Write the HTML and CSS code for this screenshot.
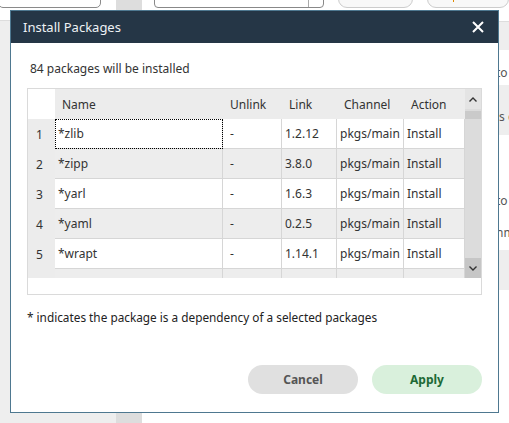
FILE: index.html
```html
<!DOCTYPE html>
<html lang="en">
<head>
    <meta charset="UTF-8">
    <meta name="viewport" content="width=device-width, initial-scale=1.0">
    <title>Install Packages</title>
    <link rel="stylesheet" href="styles.css">
</head>
<body>
<div id="page">
    <div class="side">
        <div class="sideTop"><div class="field"></div></div>
    </div>
    <div class="strip"></div>
    <div class="main">
        <div class="toolbar">
            <div class="select"><span class="caret"></span></div>
            <div class="btn"></div>
            <div class="btn"><span class="mark"></span></div>
        </div>
        <div class="list">
            <div class="item grey h28"></div>
            <div class="item h35 p14"><span>to a</span></div>
            <div class="item grey h50 p23"><span>is c</span></div>
            <div class="item h50"></div>
            <div class="item h30 p7"><span>to a</span></div>
            <div class="item h35 p9"><span>nm</span></div>
            <div class="item grey h40"></div>
        </div>
    </div>
</div>

<div class="dialog">
    <div class="dialogHead">
        <span class="title">Install Packages</span>
        <span class="close">
            <svg width="12" height="12" viewBox="0 0 12 12">
                <path d="M1 1L11 11M11 1L1 11" stroke="#fff" stroke-width="2" fill="none"/>
            </svg>
        </span>
    </div>
    <div class="dialogBody">
        <p class="count">84 packages will be installed</p>
        <div class="tableBox">
            <div class="viewport">
                <div class="tableArea">
                    <table class="pkgs">
                        <colgroup>
                            <col style="width:27px">
                            <col style="width:168px">
                            <col style="width:59px">
                            <col style="width:55px">
                            <col style="width:67px">
                            <col style="width:61px">
                        </colgroup>
                        <thead>
                            <tr>
                                <th class="corner"></th>
                                <th>Name</th>
                                <th>Unlink</th>
                                <th>Link</th>
                                <th>Channel</th>
                                <th>Action</th>
                            </tr>
                        </thead>
                        <tbody>
                            <tr>
                                <td class="num">1</td>
                                <td class="focus">*zlib</td>
                                <td class="dash">-</td>
                                <td>1.2.12</td>
                                <td>pkgs/main</td>
                                <td>Install</td>
                            </tr>
                            <tr>
                                <td class="num">2</td>
                                <td>*zipp</td>
                                <td class="dash">-</td>
                                <td>3.8.0</td>
                                <td>pkgs/main</td>
                                <td>Install</td>
                            </tr>
                            <tr>
                                <td class="num">3</td>
                                <td>*yarl</td>
                                <td class="dash">-</td>
                                <td>1.6.3</td>
                                <td>pkgs/main</td>
                                <td>Install</td>
                            </tr>
                            <tr>
                                <td class="num">4</td>
                                <td>*yaml</td>
                                <td class="dash">-</td>
                                <td>0.2.5</td>
                                <td>pkgs/main</td>
                                <td>Install</td>
                            </tr>
                            <tr>
                                <td class="num">5</td>
                                <td>*wrapt</td>
                                <td class="dash">-</td>
                                <td>1.14.1</td>
                                <td>pkgs/main</td>
                                <td>Install</td>
                            </tr>
                            <tr>
                                <td class="num">6</td>
                                <td>*wheel</td>
                                <td class="dash">-</td>
                                <td>0.37.1</td>
                                <td>pkgs/main</td>
                                <td>Install</td>
                            </tr>
                        </tbody>
                    </table>
                </div>
                <div class="scrollbar">
                    <div class="arrow up">
                        <svg width="8" height="5" viewBox="0 0 8 5"><path d="M0.5 4.5L4 1L7.5 4.5" stroke="#333" stroke-width="1.4" fill="none"/></svg>
                    </div>
                    <div class="thumb"></div>
                    <div class="track"></div>
                    <div class="arrow down">
                        <svg width="8" height="5" viewBox="0 0 8 5"><path d="M0.5 0.5L4 4L7.5 0.5" stroke="#333" stroke-width="1.4" fill="none"/></svg>
                    </div>
                </div>
            </div>
            <div class="tableFoot"></div>
        </div>
        <p class="note">* indicates the package is a dependency of a selected packages</p>
        <div class="actions">
            <button class="cancel">Cancel</button>
            <button class="apply">Apply</button>
        </div>
    </div>
</div>
</body>
</html>
```

FILE: styles.css
```css
* {
    box-sizing: border-box;
}
html, body {
    margin: 0;
    height: 100%;
}
body {
    position: relative;
    overflow: hidden;
    background: #fff;
    font: 12px "Noto Sans", "Open Sans", sans-serif;
    color: #333;
}

/* page under the dialog */
#page {
    display: grid;
    grid-template-columns: 116px 26px 1fr;
    height: 100%;
}
.side {
    background: #eee;
}
.sideTop {
    height: 21px;
    background: #fff;
    border-bottom: 1px solid #ddd;
    overflow: hidden;
}
.field {
    width: 103px;
    height: 18px;
    margin: -10px 0 0 -2px;
    border: 1px solid #8a8a8a;
    border-radius: 5px;
}
.strip {
    background: #ddd;
}
.main {
    overflow: hidden;
}
.toolbar {
    display: flex;
    gap: 14px;
    height: 22px;
    padding-left: 12px;
    border-bottom: 1px solid #ddd;
    overflow: hidden;
}
.select {
    position: relative;
    width: 188px;
    height: 18px;
    margin-top: -10px;
    border: 1px solid #888;
    border-radius: 4px;
}
.caret {
    position: absolute;
    right: 14px;
    top: 0;
    bottom: 0;
    border-left: 1px solid #aaa;
}
.btn {
    position: relative;
    width: 83px;
    height: 18px;
    margin-top: -10px;
    border: 1px solid #ccc;
    border-radius: 9px;
    background: #f8f8f8;
}
.btn:last-child {
    width: 90px;
}
.mark {
    position: absolute;
    left: 25px;
    top: 8px;
    width: 1px;
    height: 3px;
    background: #e08a00;
}
.item {
    padding-left: 354px;
    line-height: 17px;
    color: #555;
    white-space: nowrap;
}
.grey {
    background: #eee;
}
.h28 { height: 28px; }
.h30 { height: 30px; }
.h35 { height: 35px; }
.h40 { height: 40px; }
.h50 { height: 50px; }
.p7 { padding-top: 7px; }
.p9 { padding-top: 9px; }
.p14 { padding-top: 14px; }
.p23 { padding-top: 23px; }

/* dialog */
.dialog {
    position: absolute;
    left: 10px;
    top: 10px;
    width: 489px;
    height: 403px;
    display: flex;
    flex-direction: column;
    background: #fff;
    border: 1px solid #4e7890;
}
.dialogHead {
    display: flex;
    align-items: center;
    justify-content: space-between;
    height: 32px;
    padding: 0 14px 0 12px;
    background: #253646;
}
.title {
    font-size: 13px;
    color: #eef2f5;
}
.close {
    display: flex;
}
.dialogBody {
    flex: 1;
    display: flex;
    flex-direction: column;
    padding: 0 16px 18px 16px;
}
.count {
    margin: 16px 0 0 3px;
    line-height: 20px;
    color: #333;
}
.tableBox {
    margin-top: 9px;
    width: 455px;
    border: 1px solid #dadada;
}
.viewport {
    display: flex;
    height: 189px;
}
.tableArea {
    width: 437px;
    overflow: hidden;
}
.pkgs {
    table-layout: fixed;
    width: 437px;
    border-collapse: separate;
    border-spacing: 0;
}
.pkgs th {
    height: 30px;
    padding: 0 0 0 7px;
    background: #ececec;
    font-weight: normal;
    text-align: left;
    color: #333;
}
.pkgs th.corner {
    background: #fff;
}
.pkgs td {
    height: 30px;
    padding: 0 0 0 3px;
    border-right: 1px solid #d6d6d6;
    border-bottom: 1px solid #d6d6d6;
    white-space: nowrap;
    overflow: hidden;
    color: #333;
}
.pkgs tbody tr:nth-child(odd) td {
    background: #fff;
}
.pkgs tbody tr:nth-child(even) td {
    background: #ededed;
}
.pkgs td.num {
    padding-left: 8px;
    background: #ececec !important;
    border: none;
}
.pkgs td.dash {
    padding-left: 7px;
}
.pkgs td.focus {
    outline: 1px dotted #000;
    outline-offset: -1px;
}
.scrollbar {
    display: flex;
    flex-direction: column;
    width: 16px;
    background: #dcdcdc;
}
.arrow {
    display: flex;
    align-items: center;
    justify-content: center;
    height: 20px;
}
.up {
    background: #e4e4e4;
}
.down {
    background: #c6c6c6;
}
.thumb {
    height: 8px;
    margin-top: 2px;
    background: #cacaca;
}
.track {
    flex: 1;
}
.tableFoot {
    height: 16px;
}
.note {
    margin: 13px 0 0 0;
    line-height: 18px;
    font-size: 11.8px;
    color: #222;
}
.actions {
    margin-top: auto;
    display: flex;
    justify-content: flex-end;
    gap: 14px;
}
.actions button {
    width: 110px;
    height: 29px;
    border: none;
    border-radius: 15px;
    font: bold 12px "Noto Sans", "Open Sans", sans-serif;
}
.cancel {
    background: #e0e0e0;
    color: #555;
}
.apply {
    background: #d9f0dc;
    color: #1d6a35;
}
```
